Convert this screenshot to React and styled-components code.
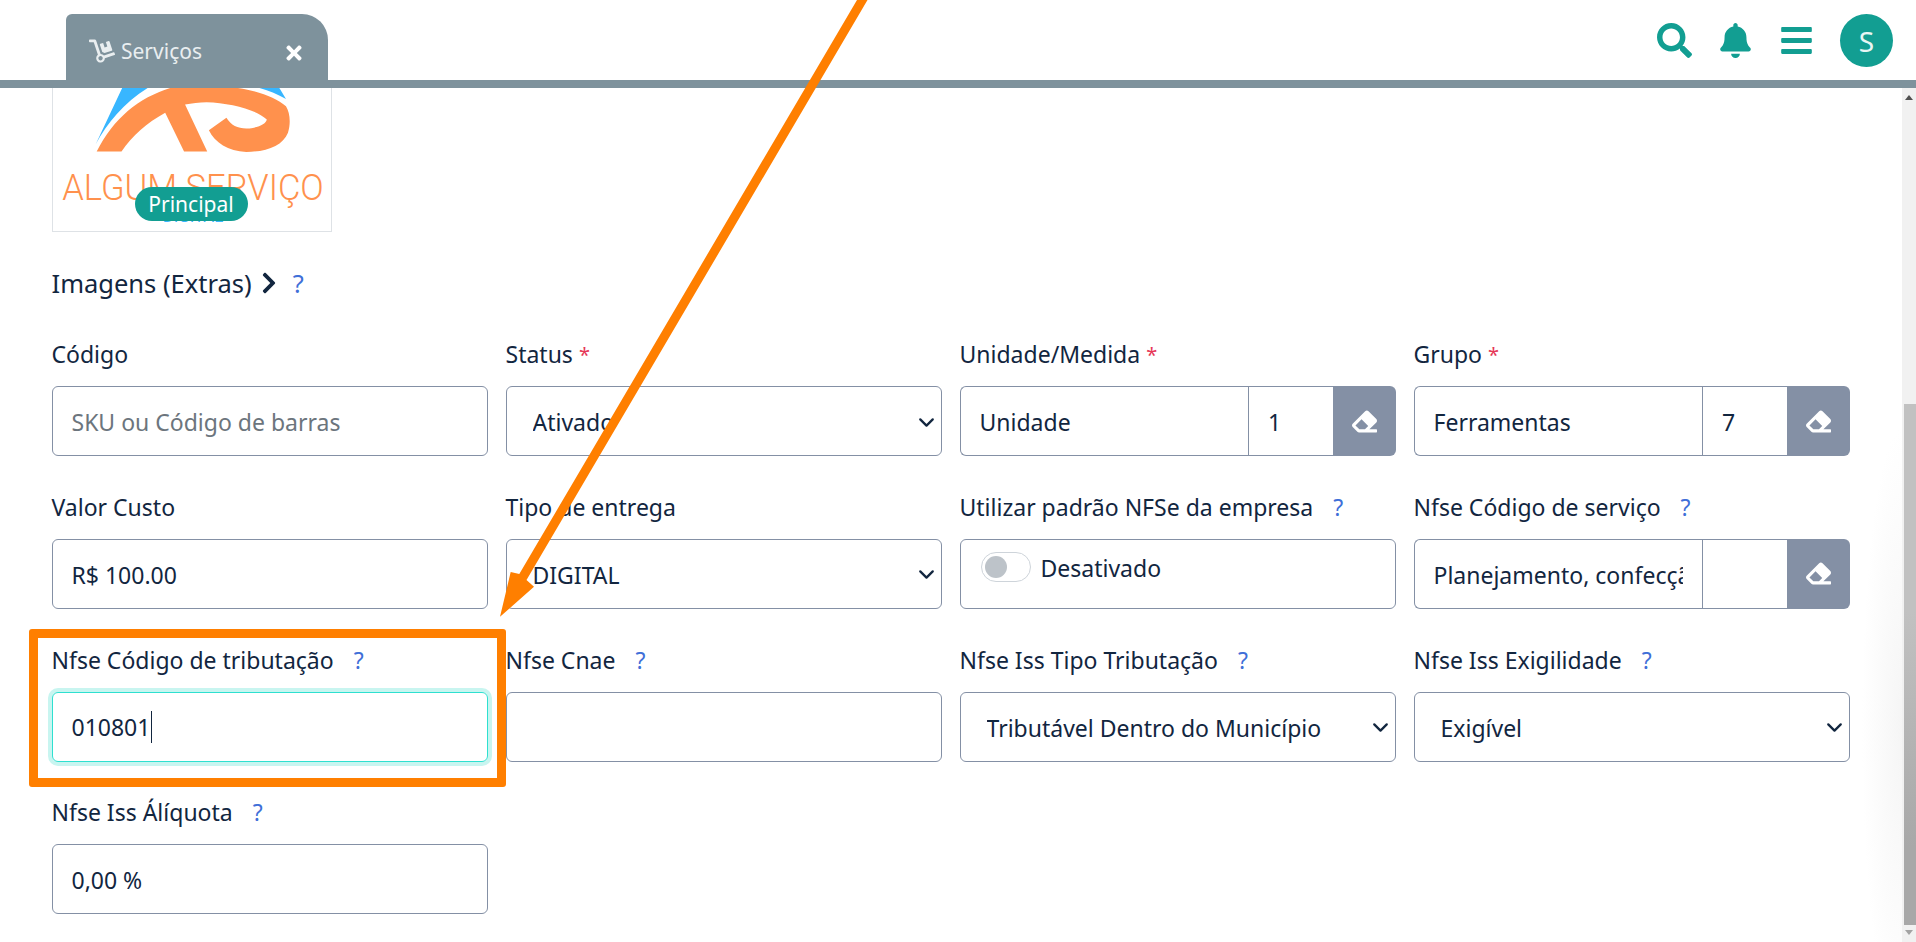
import React from 'react'
import styled, { createGlobalStyle } from 'styled-components'
import { FaBars, FaBell, FaChevronRight, FaDolly, FaEraser, FaSearch, FaTimes } from 'react-icons/fa'
import { ChevronDown } from 'lucide-react'

const teal = '#129e92'
const slate = '#7e929c'
const ink = '#12263f'
const line = '#8490a5'

const GlobalStyle = createGlobalStyle`
    html, body {
        margin: 0;
        height: 100%;
        overflow: hidden;
        background: #fff;
    }
    body, input, select {
        font-family: "Noto Sans", "Open Sans", sans-serif;
        font-size: 23px;
        color: ${ink};
    }
`

const Page = styled.div`
    position: relative;
    display: flex;
    flex-direction: column;
    height: 100vh;
    overflow: hidden;
`

const Header = styled.header`
    position: relative;
    z-index: 2;
    flex: none;
    display: flex;
    align-items: flex-start;
    box-sizing: border-box;
    height: 88px;
    padding: 14px 23px 0 66px;
    background: #fff;
    border-bottom: 8px solid ${slate};
`

const Tab = styled.div`
    display: flex;
    align-items: center;
    box-sizing: border-box;
    width: 262px;
    height: 74px;
    padding: 0 23px 1px 23px;
    background: ${slate};
    border-radius: 6px 26px 0 0;
    color: #e9eef0;
`

const TabTitle = styled.span`
    margin-left: 6px;
    flex: 1;
    font-size: 21px;
`

const CloseIcon = styled(FaTimes)`
    color: #fff;
    font-size: 22px;
    margin-top: 4px;
`

const Tools = styled.div`
    margin-left: auto;
    display: flex;
    align-items: center;
    gap: 26px;
    height: 53px;
    color: ${teal};
    font-size: 35px;
`

const Avatar = styled.div`
    width: 53px;
    height: 53px;
    border-radius: 50%;
    background: ${teal};
    color: #e8f6f4;
    font-size: 28px;
    display: flex;
    align-items: center;
    justify-content: center;
`

const Body = styled.div`
    flex: 1;
    min-height: 0;
    display: flex;
`

const Main = styled.main`
    flex: 1;
    min-width: 0;
    padding: 0 52px 0 51.5px;
    background: radial-gradient(ellipse 40px 300px at 100% 75%, #f5f5f5, transparent);
`

const ImageBox = styled.div`
    position: relative;
    box-sizing: border-box;
    width: 280px;
    height: 144px;
    border: 1px solid #dee2e6;
    border-top: none;
`

const Logo = styled.svg`
    display: block;
    width: 100%;
    height: 100%;
`

const Badge = styled.span`
    position: absolute;
    left: 82px;
    bottom: 10px;
    box-sizing: border-box;
    width: 113px;
    height: 34px;
    border-radius: 17px;
    background: ${teal};
    color: #fff;
    font-size: 21px;
    line-height: 35px;
    text-align: center;
`

const ExtrasRow = styled.div`
    display: flex;
    align-items: center;
    height: 30px;
    margin: 36px 0 41px;
    font-size: 25.5px;
`

const ExtrasChevron = styled(FaChevronRight)`
    font-size: 24px;
    margin-left: 5px;
`

const Help = styled.span`
    color: #3f6fd8;
    margin-left: ${p => p.$gap || 20}px;
`

const Grid = styled.div`
    display: grid;
    grid-template-columns: repeat(4, 1fr);
    column-gap: 17.5px;
    row-gap: 35.8px;
`

const Field = styled.div`
    position: relative;
    min-width: 0;
    ${p => p.$highlight && `
        &::after {
            content: "";
            position: absolute;
            top: -16px;
            left: -23px;
            right: -18px;
            bottom: -25px;
            border: 9px solid #ff7f00;
            border-radius: 3px;
            pointer-events: none;
        }
    `}
`

const Label = styled.label`
    display: flex;
    align-items: center;
    height: 30px;
    margin-bottom: 17px;
    white-space: nowrap;
`

const Required = styled.span`
    color: #e63757;
    margin-left: 6px;
    font-size: 20px;
`

const Input = styled.input`
    display: block;
    box-sizing: border-box;
    width: 100%;
    min-width: 0;
    height: 70px;
    padding: 2px 19px 0;
    border: 1px solid ${line};
    border-radius: 6px;
    background: #fff;
    outline: none;
    &::placeholder {
        color: #6c757d;
        opacity: 1;
    }
`

const FocusBox = styled.div`
    display: flex;
    align-items: center;
    box-sizing: border-box;
    height: 70px;
    padding: 1px 19px 0;
    border: 1px solid #2ee0d0;
    border-radius: 6px;
    box-shadow: 0 0 0 4px #c8f5f0;
`

const Caret = styled.span`
    width: 1px;
    height: 32px;
    margin-left: 1px;
    background: ${ink};
`

const SelectWrap = styled.div`
    position: relative;
`

const Select = styled.select`
    display: block;
    box-sizing: border-box;
    width: 100%;
    height: 70px;
    padding: 2px 40px 0 26px;
    border: 1px solid ${line};
    border-radius: 6px;
    background: #fff;
    appearance: none;
    outline: none;
`

const SelectChevron = styled(ChevronDown)`
    position: absolute;
    top: 23.5px;
    right: 3.5px;
    pointer-events: none;
`

const Group = styled.div`
    display: grid;
    grid-template-columns: 1fr 85px 63px;
    height: 70px;
`

const GroupName = styled(Input)`
    border-right: none;
    border-radius: 6px 0 0 6px;
`

const GroupCode = styled(Input)`
    border-radius: 0;
    border-right: none;
`

const EraseButton = styled.button`
    display: flex;
    align-items: center;
    justify-content: center;
    padding: 0;
    border: none;
    border-radius: 0 6px 6px 0;
    background: ${line};
    color: #fff;
    font-size: 25px;
`

const SwitchBox = styled.div`
    display: flex;
    align-items: flex-start;
    gap: 10px;
    box-sizing: border-box;
    height: 70px;
    padding: 12px 20px;
    border: 1px solid ${line};
    border-radius: 6px;
`

const Track = styled.span`
    flex: none;
    display: flex;
    align-items: center;
    box-sizing: border-box;
    width: 50px;
    height: 30px;
    padding-left: 3px;
    border: 1px solid #ced4da;
    border-radius: 15px;
`

const Knob = styled.span`
    width: 22px;
    height: 22px;
    border-radius: 50%;
    background: #bdc3c9;
`

const SwitchText = styled.span`
    line-height: 30px;
    margin-top: 1px;
`

const Scrollbar = styled.aside`
    flex: none;
    display: flex;
    flex-direction: column;
    align-items: flex-end;
    width: 14px;
    background: #f1f1f1;
`

const ScrollUp = styled.span`
    align-self: center;
    margin-top: 7px;
    border: 4px solid transparent;
    border-top: none;
    border-bottom: 5px solid #505050;
`

const ScrollThumb = styled.span`
    width: 12px;
    height: 521px;
    margin-top: 304px;
    background: linear-gradient(#c1c1c1 40%, #a8a8a8 85%);
`

const ScrollDown = styled.span`
    align-self: center;
    margin-top: 5px;
    border: 4px solid transparent;
    border-bottom: none;
    border-top: 5px solid #a3a3a3;
`

const Annotation = styled.svg`
    position: absolute;
    inset: 0;
    z-index: 3;
    width: 100%;
    height: 100%;
    pointer-events: none;
`

const LabelText = ({ children, required, help }) => (
    <Label>
        {children}
        {required && <Required>*</Required>}
        {help && <Help>?</Help>}
    </Label>
)

const SelectField = ({ label, value, required, help }) => (
    <Field>
        <LabelText required={required} help={help}>{label}</LabelText>
        <SelectWrap>
            <Select defaultValue={value}>
                <option>{value}</option>
            </Select>
            <SelectChevron size={25} strokeWidth={2.2} color={ink} />
        </SelectWrap>
    </Field>
)

const GroupField = ({ label, name, code, required, help }) => (
    <Field>
        <LabelText required={required} help={help}>{label}</LabelText>
        <Group>
            <GroupName readOnly value={name} />
            <GroupCode readOnly value={code} />
            <EraseButton type="button"><FaEraser /></EraseButton>
        </Group>
    </Field>
)

const TextField = ({ label, value, placeholder, help }) => (
    <Field>
        <LabelText help={help}>{label}</LabelText>
        <Input readOnly value={value || ''} placeholder={placeholder} />
    </Field>
)

export default function App() {
    return (
        <Page>
            <GlobalStyle />
            <Header>
                <Tab>
                    <FaDolly size={26} />
                    <TabTitle>Serviços</TabTitle>
                    <CloseIcon />
                </Tab>
                <Tools>
                    <FaSearch />
                    <FaBell />
                    <FaBars />
                    <Avatar>S</Avatar>
                </Tools>
            </Header>
            <Body>
                <Main>
                    <ImageBox>
                        <Logo viewBox="-24 0 840 432" preserveAspectRatio="none">
                            <path fill="#38b6ff" d="M105 170 L185 0 L262 0 C190 45 140 105 105 170 Z" />
                            <path fill="#38b6ff" d="M600 0 L660 0 L680 33 C655 20 630 8 600 0 Z" />
                            <path fill="#ff914d" d="M108 192 C160 90 235 30 330 0 L535 0 C600 10 650 30 680 55 C692 75 695 105 686 135 C670 175 620 193 560 193 C505 192 465 165 447 128 L500 90 C515 115 540 125 570 122 C600 118 620 108 622 95 C590 65 510 45 440 43 C418 43 395 46 375 50 L442 192 L372 192 L315 75 C260 105 215 145 183 192 Z" />
                            <text x="4" y="339" fontFamily="Roboto" fontWeight="300" fontSize="114" fill="#ff914d" textLength="790" lengthAdjust="spacingAndGlyphs">ALGUM SERVIÇO</text>
                            <text x="308" y="405" fontFamily="Roboto" fontWeight="400" fontSize="52" fill="#38b6ff" textLength="182" lengthAdjust="spacingAndGlyphs">DIGITAL</text>
                        </Logo>
                        <Badge>Principal</Badge>
                    </ImageBox>
                    <ExtrasRow>
                        Imagens (Extras)
                        <ExtrasChevron />
                        <Help $gap={12}>?</Help>
                    </ExtrasRow>
                    <Grid>
                        <TextField label="Código" placeholder="SKU ou Código de barras" />
                        <SelectField label="Status" value="Ativado" required />
                        <GroupField label="Unidade/Medida" name="Unidade" code="1" required />
                        <GroupField label="Grupo" name="Ferramentas" code="7" required />

                        <TextField label="Valor Custo" value="R$ 100.00" />
                        <SelectField label="Tipo de entrega" value="DIGITAL" />
                        <Field>
                            <LabelText help>Utilizar padrão NFSe da empresa</LabelText>
                            <SwitchBox>
                                <Track><Knob /></Track>
                                <SwitchText>Desativado</SwitchText>
                            </SwitchBox>
                        </Field>
                        <GroupField label="Nfse Código de serviço" name="Planejamento, confecção, manutenção" code="" help />

                        <Field $highlight>
                            <LabelText help>Nfse Código de tributação</LabelText>
                            <FocusBox>010801<Caret /></FocusBox>
                        </Field>
                        <TextField label="Nfse Cnae" help />
                        <SelectField label="Nfse Iss Tipo Tributação" value="Tributável Dentro do Município" help />
                        <SelectField label="Nfse Iss Exigilidade" value="Exigível" help />

                        <TextField label="Nfse Iss Álíquota" value="0,00 %" help />
                    </Grid>
                </Main>
                <Scrollbar>
                    <ScrollUp />
                    <ScrollThumb />
                    <ScrollDown />
                </Scrollbar>
            </Body>
            <Annotation viewBox="0 0 1916 942">
                <polygon fill="#ff7f00" points="857,0 867.5,0 526.5,580 534,586.7 500,616.7 510.7,572 519.3,574" />
            </Annotation>
        </Page>
    )
}
